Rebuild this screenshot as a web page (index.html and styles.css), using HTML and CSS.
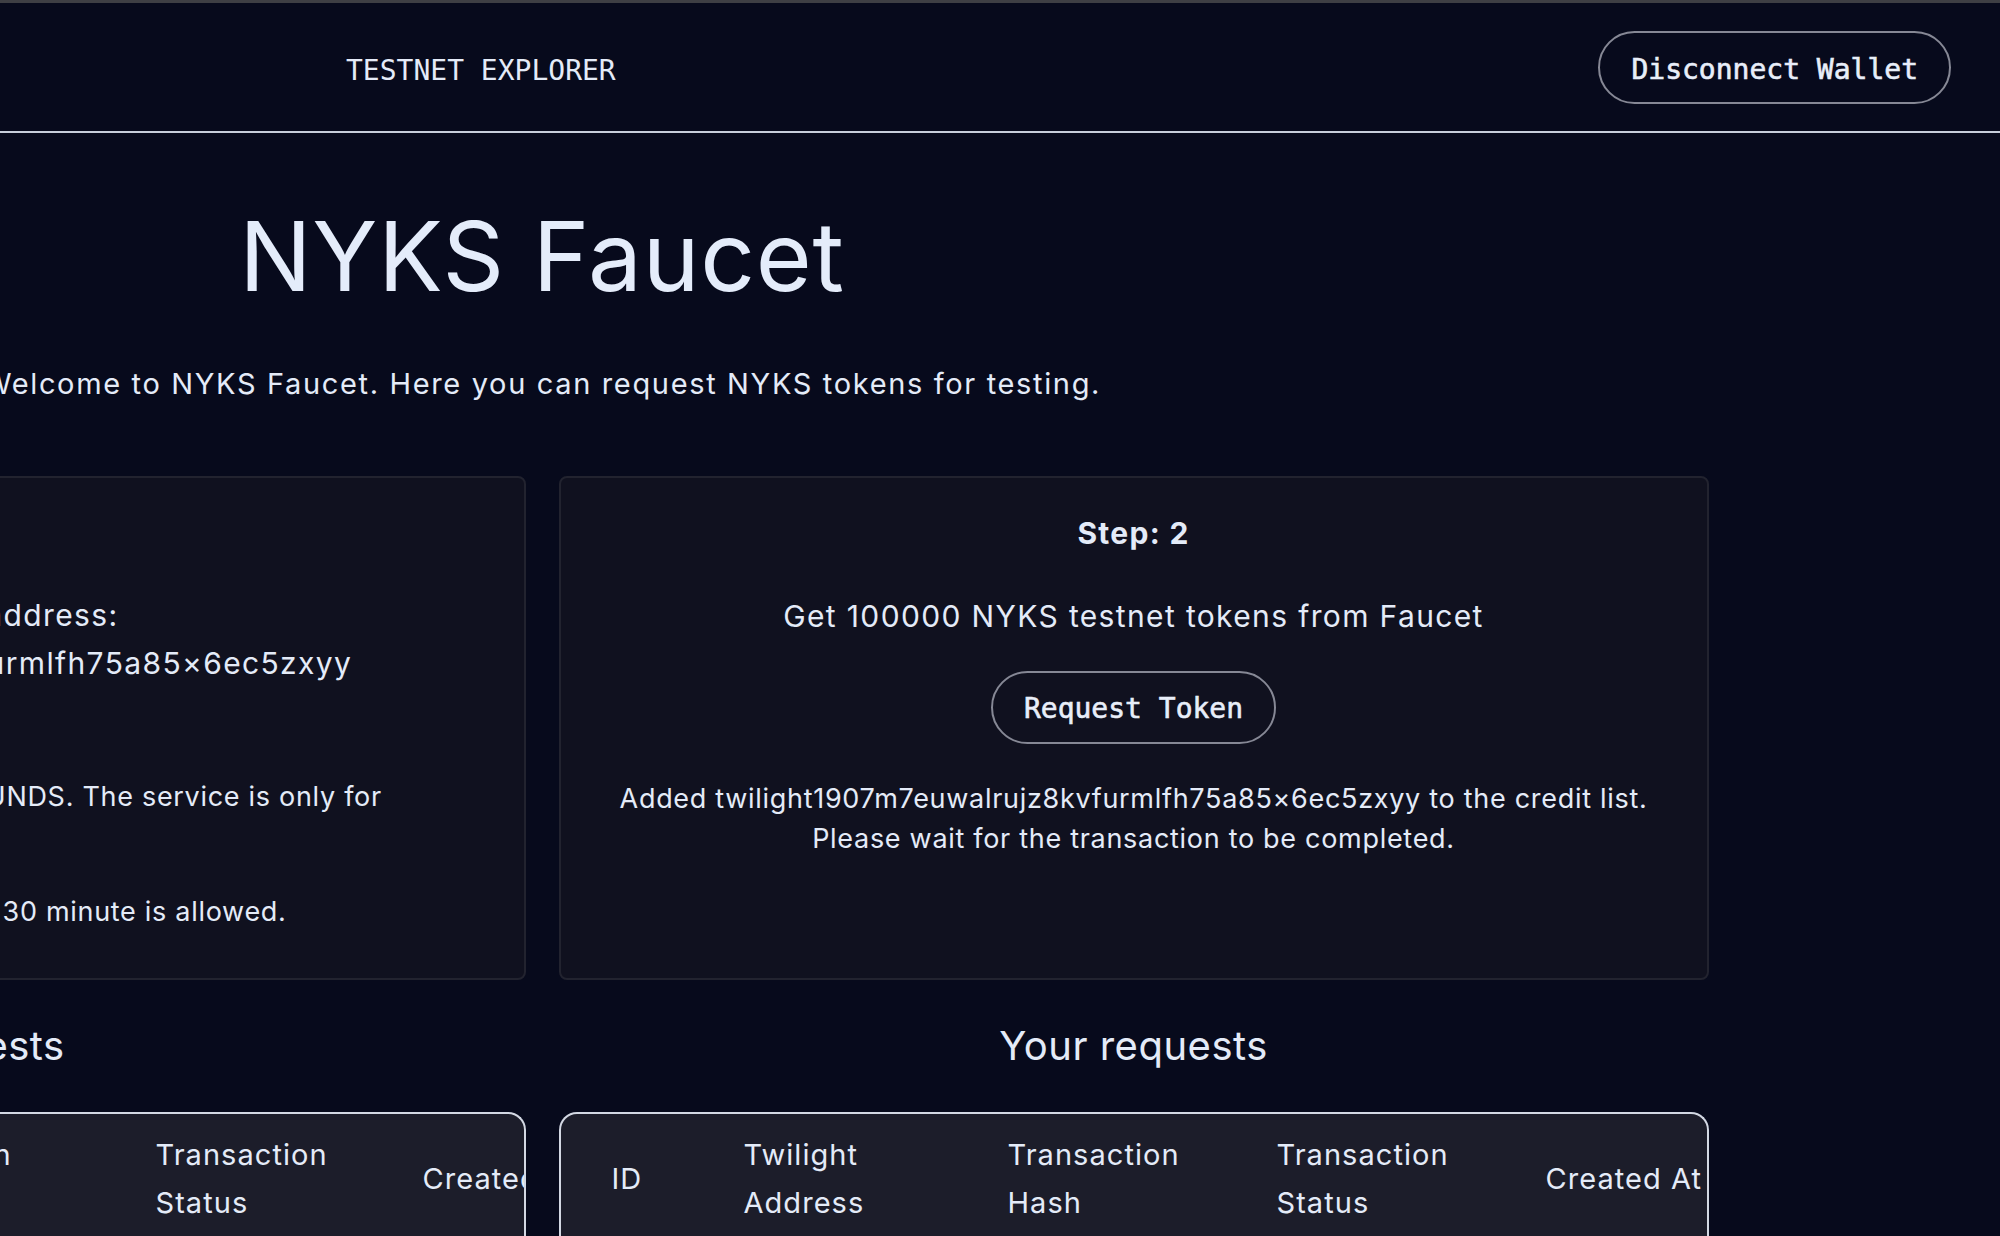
FILE: index.html
```html
<!DOCTYPE html>
<html lang="en">
<head>
<meta charset="utf-8">
<title>NYKS Faucet</title>
<link rel="stylesheet" href="styles.css">
</head>
<body>
<header class="header">
  <nav class="nav"><a class="nav-link" href="#">TESTNET EXPLORER</a></nav>
  <button class="pill-btn">Disconnect Wallet</button>
</header>
<main class="main">
  <h1 class="title">NYKS Faucet</h1>
  <p class="welcome">Welcome to NYKS Faucet. Here you can request NYKS tokens for testing.</p>
  <div class="cards">
    <section class="card card-first">
      <h3 class="step">Step: 1</h3>
      <p class="lead addr">Your Twilight address:<br>twilight1907m7euwalrujz8kvfurmlfh75a85×6ec5zxyy</p>
      <p class="note warn">Note: these tokens are NOT REAL FUNDS. The service is only for<br>testing.</p>
      <p class="note">One request per wallet every 30 minute is allowed.</p>
    </section>
    <section class="card">
      <h3 class="step">Step: 2</h3>
      <p class="lead">Get 100000 NYKS testnet tokens from Faucet</p>
      <button class="pill-btn">Request Token</button>
      <p class="note">Added twilight1907m7euwalrujz8kvfurmlfh75a85×6ec5zxyy to the credit list.<br>Please wait for the transaction to be completed.</p>
    </section>
  </div>
  <div class="requests">
    <section class="req-col">
      <h2 class="req-title">All requests</h2>
      <div class="table-wrap">
        <div class="thead thead-all">
          <div class="th">ID</div>
          <div class="th">Twilight<br>Address</div>
          <div class="th">Transaction<br>Hash</div>
          <div class="th">Transaction<br>Status</div>
          <div class="th">Created At</div>
        </div>
      </div>
    </section>
    <section class="req-col">
      <h2 class="req-title">Your requests</h2>
      <div class="table-wrap">
        <div class="thead thead-yours">
          <div class="th">ID</div>
          <div class="th">Twilight<br>Address</div>
          <div class="th">Transaction<br>Hash</div>
          <div class="th">Transaction<br>Status</div>
          <div class="th">Created At</div>
        </div>
      </div>
    </section>
  </div>
</main>
</body>
</html>
```

FILE: styles.css
```css
* { box-sizing: border-box; }

html, body {
  margin: 0;
  padding: 0;
}

body {
  width: 2000px;
  height: 1236px;
  overflow: hidden;
  background: #070a1c;
  color: #e4ebf8;
  font-family: Inter, "Noto Sans", sans-serif;
  border-top: 3px solid #3e3f44;
}

.header {
  height: 130px;
  display: flex;
  align-items: center;
  justify-content: space-between;
  padding: 0 49px 0 346px;
  border-bottom: 2px solid #c8cedb;
}

.nav {
  padding-top: 6px;
}

.nav-link {
  font-family: "DejaVu Sans Mono", "Liberation Mono", monospace;
  font-size: 28px;
  color: #e4ebf8;
  text-decoration: none;
}

.pill-btn {
  font-family: "DejaVu Sans Mono", "Liberation Mono", monospace;
  font-size: 28px;
  font-weight: 400;
  -webkit-text-stroke: 0.6px currentColor;
  line-height: 42px;
  color: #e8eef9;
  background: transparent;
  border: 2px solid #868895;
  border-radius: 999px;
  padding: 16px 31px 11px;
  cursor: pointer;
}

.card .pill-btn {
  padding: 15px 31px 12px;
}

.main {
  width: 1084px;
  display: flex;
  flex-direction: column;
  align-items: center;
}

.title {
  margin: 75px 0 0;
  font-size: 96px;
  font-weight: 400;
  line-height: 1;
  letter-spacing: 0.8px;
  color: #e4ecfa;
}

.welcome {
  margin: 58px 0 0;
  font-size: 29px;
  line-height: 1.5;
  letter-spacing: 1.65px;
  white-space: nowrap;
}

.cards,
.requests {
  flex: 0 0 auto;
  width: 2333px;
  display: flex;
  gap: 33px;
}

.cards { margin-top: 70px; }

.card {
  flex: 0 0 1150px;
  min-width: 0;
  height: 504px;
  display: flex;
  flex-direction: column;
  align-items: center;
  gap: 35px;
  padding: 33px 40px;
  text-align: center;
  white-space: nowrap;
  background: #10111f;
  border: 2px solid #22232f;
  border-radius: 8px;
}

.card-first {
  padding-right: 48px;
}

.step {
  margin: 0;
  font-size: 30px;
  font-weight: 700;
  line-height: 45px;
  letter-spacing: 1.3px;
}

.lead {
  margin: 3px 0 -3px;
  font-size: 30px;
  line-height: 45px;
  letter-spacing: 1.36px;
}

.lead.addr {
  margin: 0;
  line-height: 48px;
}

.note {
  margin: 0;
  font-size: 27px;
  line-height: 40px;
  letter-spacing: 0.7px;
}

.note.warn {
  margin-top: 55px;
}

.requests { margin-top: 36px; }

.req-col {
  flex: 0 0 1150px;
  min-width: 0;
  display: flex;
  flex-direction: column;
  align-items: center;
}

.req-title {
  margin: 0;
  font-size: 40px;
  font-weight: 400;
  line-height: 60px;
  letter-spacing: 0.5px;
}

.table-wrap {
  margin-top: 36px;
  width: 100%;
  min-width: 0;
  height: 200px;
  overflow: hidden;
  border: 2px solid #d3d8e3;
  border-bottom: none;
  border-radius: 18px 18px 0 0;
  background: #1c1d2a;
}

.thead {
  display: grid;
  align-items: center;
  padding: 17px 0 16px 51px;
  font-size: 29px;
  line-height: 48px;
  letter-spacing: 1.05px;
  white-space: nowrap;
}

.thead-all { grid-template-columns: 160px 251px 316px 267px max-content; }
.thead-yours { grid-template-columns: 132px 264px 269px 269px max-content; }
```
